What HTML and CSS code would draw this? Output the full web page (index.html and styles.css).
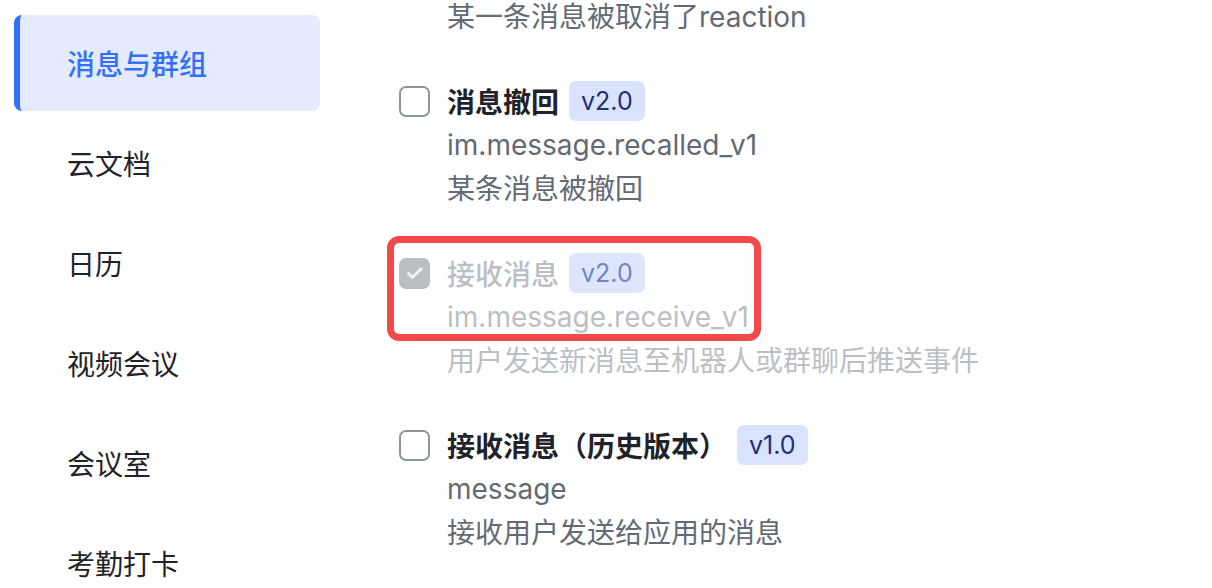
FILE: index.html
```html
<!DOCTYPE html>
<html lang="zh">
<head>
<meta charset="utf-8">
<link rel="stylesheet" href="styles.css">
</head>
<body>
<div class="page">
  <nav class="sidebar">
    <div class="nav-item active">消息与群组</div>
    <div class="nav-item">云文档</div>
    <div class="nav-item">日历</div>
    <div class="nav-item">视频会议</div>
    <div class="nav-item">会议室</div>
    <div class="nav-item">考勤打卡</div>
  </nav>
  <main class="content">
    <div class="event partial">
      <div class="box-col"></div>
      <div class="info">
        <div class="desc">某一条消息被取消了reaction</div>
      </div>
    </div>
    <div class="event">
      <div class="box-col"><span class="checkbox"></span></div>
      <div class="info">
        <div class="title-row"><span class="title">消息撤回</span><span class="badge">v2.0</span></div>
        <div class="code">im.message.recalled_v1</div>
        <div class="desc">某条消息被撤回</div>
      </div>
    </div>
    <div class="event disabled">
      <div class="box-col"><span class="checkbox checked"><svg viewBox="0 0 20 20" width="20" height="20"><path d="M3.5 10.5l4 3.8 8.5-8.3" fill="none" stroke="#f2f3f5" stroke-width="3" stroke-linecap="round" stroke-linejoin="round"/></svg></span></div>
      <div class="info">
        <div class="title-row"><span class="title">接收消息</span><span class="badge">v2.0</span></div>
        <div class="code">im.message.receive_v1</div>
        <div class="desc">用户发送新消息至机器人或群聊后推送事件</div>
      </div>
      <div class="highlight"></div>
    </div>
    <div class="event">
      <div class="box-col"><span class="checkbox"></span></div>
      <div class="info">
        <div class="title-row"><span class="title">接收消息（历史版本）</span><span class="badge">v1.0</span></div>
        <div class="code">message</div>
        <div class="desc">接收用户发送给应用的消息</div>
      </div>
    </div>
  </main>
</div>
</body>
</html>
```
FILE: styles.css
```css
* { box-sizing: border-box; }
html, body {
  margin: 0;
  padding: 0;
  background: #fff;
  overflow: hidden;
}
body {
  font-family: Inter, "Noto Sans CJK SC", sans-serif;
  font-size: 28px;
  color: #1f2329;
}
.page {
  display: flex;
  width: 1212px;
  height: 588px;
  overflow: hidden;
}
.sidebar {
  width: 306px;
  margin-left: 14px;
  padding-top: 15px;
  display: flex;
  flex-direction: column;
  gap: 4px;
  flex-shrink: 0;
}
.nav-item {
  flex-shrink: 0;
  height: 96px;
  display: flex;
  align-items: center;
  padding-left: 53px;
  font-size: 28px;
  color: #1f2329;
  border-radius: 8px;
}
.nav-item.active {
  background: #e5ebfe;
  color: #3370ff;
  border-left: 6px solid #3370ff;
  padding-left: 47px;
  font-weight: 500;
}
.content {
  padding-left: 79px;
  margin-top: -5px;
  display: flex;
  flex-direction: column;
  gap: 40px;
}
.event {
  position: relative;
  display: grid;
  grid-template-columns: 32px 1fr;
  column-gap: 16px;
  flex-shrink: 0;
}
.box-col {
  height: 44px;
  display: flex;
  align-items: center;
}
.checkbox {
  width: 31px;
  height: 31px;
  border: 2px solid #8f959e;
  border-radius: 7px;
  display: flex;
  align-items: center;
  justify-content: center;
}
.checkbox.checked {
  border-color: #bbbfc4;
  background: #bbbfc4;
}
.info {
  display: flex;
  flex-direction: column;
}
.title-row {
  height: 44px;
  display: flex;
  align-items: center;
  gap: 10px;
}
.title {
  font-weight: 600;
  color: #1f2329;
}
.badge {
  height: 40px;
  padding: 0 12px;
  border-radius: 7px;
  background: #d9e3fd;
  color: #1f2f79;
  font-size: 25px;
  display: flex;
  align-items: center;
}
.code, .desc {
  height: 44px;
  line-height: 44px;
  color: #646a73;
  white-space: nowrap;
}
.disabled .title,
.disabled .code,
.disabled .desc {
  color: #bbbfc4;
}
.disabled .title { font-weight: 500; }
.disabled .badge {
  background: #dde6fd;
  color: #7385c4;
}
.highlight {
  position: absolute;
  left: -12px;
  top: -15px;
  width: 374px;
  height: 105px;
  border: 7px solid #f24a4a;
  border-radius: 12px;
  pointer-events: none;
}
```
